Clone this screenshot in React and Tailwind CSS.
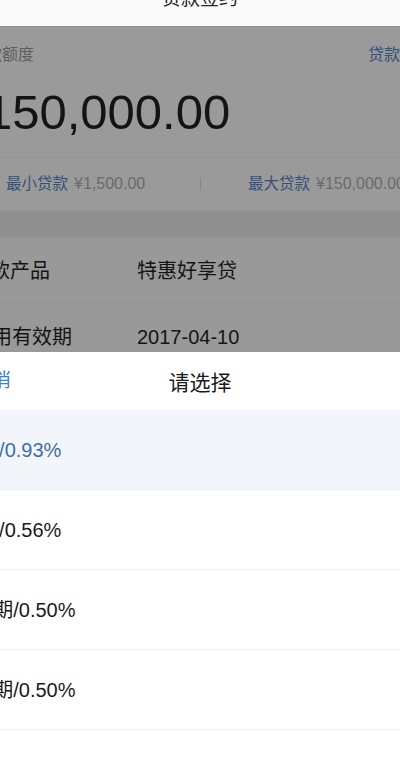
import React from "react";

const font = { fontFamily: '"Liberation Sans", "Noto Sans CJK SC", sans-serif' };

const options = [
  { label: "3期/0.93%", active: true, shift: "-ml-[32px]" },
  { label: "6期/0.56%", shift: "-ml-[32px]" },
  { label: "12期/0.50%", shift: "-ml-[29px]" },
  { label: "24期/0.50%", shift: "-ml-[29px]" },
  { label: "36期/0.50%", shift: "-ml-[29px]" },
];

export default function App() {
  return (
    <div style={font} className="relative h-[759px] w-[400px] overflow-hidden bg-[#999999]">
      {/* top bar, mostly scrolled off */}
      <div className="flex h-[27px] items-end justify-center border-b border-[#8c8c8c] bg-[#fafafa]">
        <div className="mb-[18px] text-[19px] leading-none text-[#222]">贷款签约</div>
      </div>

      {/* quota card (dimmed) */}
      <div className="bg-[#9a9a9a]">
        <div className="flex h-[56px] items-center justify-between">
          <span className="-ml-[30px] text-[16px] text-[#5e5e5e]">贷款额度</span>
          <span className="-mr-[32px] text-[16px] text-[#34507a]">贷款记录</span>
        </div>
        <div className="-ml-[15px] h-[74px] text-[49px] leading-[58px] text-[#141414]">150,000.00</div>
        <div className="flex h-[53px] items-center border-t border-[#949494]">
          <div className="flex w-[200px] shrink-0 items-baseline gap-[6px] pl-[6px]">
            <span className="text-[15.5px] text-[#34507a]">最小贷款</span>
            <span className="text-[16px] text-[#6a6a6a]">¥1,500.00</span>
          </div>
          <div className="h-[12px] w-px shrink-0 bg-[#8a8a8a]" />
          <div className="flex shrink-0 items-baseline gap-[6px] whitespace-nowrap pl-[47px]">
            <span className="text-[15.5px] text-[#34507a]">最大贷款</span>
            <span className="text-[16px] text-[#6a6a6a]">¥150,000.00</span>
          </div>
        </div>
      </div>

      <div className="h-[28px] border-y border-[#939393] bg-[#8f8f8f]" />

      {/* detail rows */}
      <div className="bg-[#999999]">
        <div className="flex h-[66px] items-center border-b border-[#949494]">
          <span className="-ml-[30px] w-[167px] text-[20px] text-[#141414]">贷款产品</span>
          <span className="text-[20px] text-[#141414]">特惠好享贷</span>
        </div>
        <div className="flex h-[66px] items-center">
          <span className="-ml-[28px] w-[165px] text-[20px] text-[#141414]">使用有效期</span>
          <span className="text-[20px] text-[#141414]">2017-04-10</span>
        </div>
      </div>

      {/* bottom sheet */}
      <div className="absolute left-0 right-0 top-[352px] bottom-0 bg-white">
        <div className="relative flex h-[58px] items-center justify-center pt-[4px]">
          <span className="absolute -left-[27px] top-[19px] text-[19px] leading-none text-[#3b82c9]">取消</span>
          <span className="text-[21px] text-[#1a1a1a]">请选择</span>
        </div>
        {options.map((o, i) => (
          <div
            key={i}
            className={
              "flex h-[80px] items-center border-b border-[#efefef] " +
              (o.active ? "bg-[#f2f5f9]" : "bg-white")
            }
          >
            <span
              className={
                o.shift +
                " whitespace-nowrap text-[20px] " +
                (o.active ? "text-[#3d6fa8]" : "text-[#1a1a1a]")
              }
            >
              {o.label}
            </span>
          </div>
        ))}
      </div>
    </div>
  );
}
